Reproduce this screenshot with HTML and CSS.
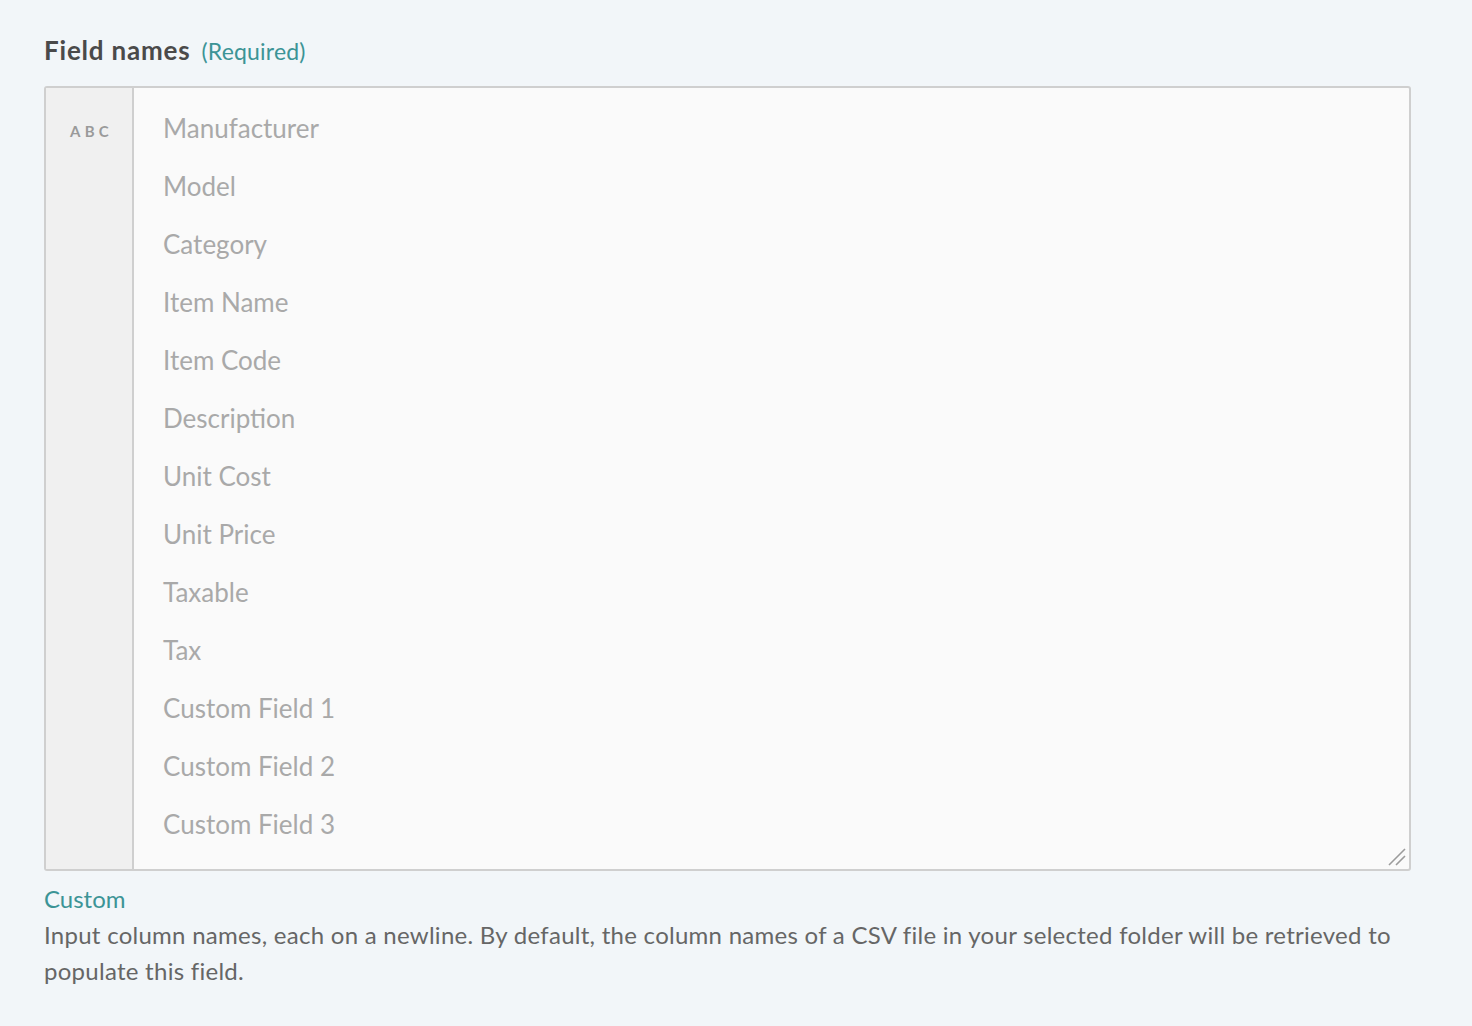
FILE: index.html
```html
<!DOCTYPE html>
<html>
<head>
<meta charset="utf-8">
<link rel="stylesheet" href="styles.css">
</head>
<body>
<div class="field">
  <div class="label-row">
    <span class="label">Field names</span>
    <span class="required">(Required)</span>
  </div>
  <div class="input-box">
    <div class="gutter"><span class="type">ABC</span></div>
    <textarea class="names" rows="13" placeholder="Manufacturer&#10;Model&#10;Category&#10;Item Name&#10;Item Code&#10;Description&#10;Unit Cost&#10;Unit Price&#10;Taxable&#10;Tax&#10;Custom Field 1&#10;Custom Field 2&#10;Custom Field 3"></textarea>
    <svg class="grip" width="20" height="20" viewBox="0 0 20 20"><path d="M3 19 L19 3 M10 19 L19 10" stroke="#9b9b9b" stroke-width="1.6" fill="none"/></svg>
  </div>
  <div class="mode">Custom</div>
  <p class="help">Input column names, each on a newline. By default, the column names of a CSV file in your selected folder will be retrieved to populate this field.</p>
</div>
</body>
</html>
```
FILE: styles.css
```css
html, body {
  margin: 0;
  padding: 0;
  background: #f2f6f9;
}
body {
  font-family: "Source Sans Pro", "Lato", "Liberation Sans", sans-serif;
  color: #555;
}
.field {
  padding: 34px 61px 0 44px;
}
.label-row {
  display: flex;
  align-items: baseline;
  gap: 11px;
  height: 36px;
  margin-bottom: 16px;
}
.label {
  font-size: 26px;
  font-weight: 700;
  letter-spacing: 0.8px;
  color: #4a4a4a;
}
.required {
  font-size: 23px;
  letter-spacing: 0.2px;
  color: #3c9496;
}
.input-box {
  position: relative;
  display: flex;
  border: 2px solid #cfcfcf;
  border-radius: 3px;
  background: #fafafa;
  box-sizing: border-box;
  height: 785px;
}
.gutter {
  width: 88px;
  flex: none;
  background: #f0f0f0;
  border-right: 2px solid #cfcfcf;
  display: flex;
  justify-content: center;
  padding-top: 35px;
  box-sizing: border-box;
}
.type {
  font-size: 15px;
  font-weight: 700;
  letter-spacing: 4.2px;
  color: #9a9a9a;
  line-height: 16px;
  margin-left: 5px;
}
.names {
  flex: 1;
  border: none;
  outline: none;
  background: transparent;
  font-family: inherit;
  font-size: 26px;
  line-height: 58px;
  padding: 11px 28px 16px 29px;
  margin: 0;
  color: #555;
  resize: none;
}
.names::placeholder {
  color: #a9a9a9;
  opacity: 1;
}
.grip {
  position: absolute;
  right: 3px;
  bottom: 3px;
}
.mode {
  margin-top: 11px;
  font-size: 24px;
  line-height: 34px;
  color: #3c9496;
}
.help {
  margin: 1px 0 0;
  font-size: 24px;
  line-height: 36px;
  letter-spacing: 0.27px;
  color: #666;
}
```
